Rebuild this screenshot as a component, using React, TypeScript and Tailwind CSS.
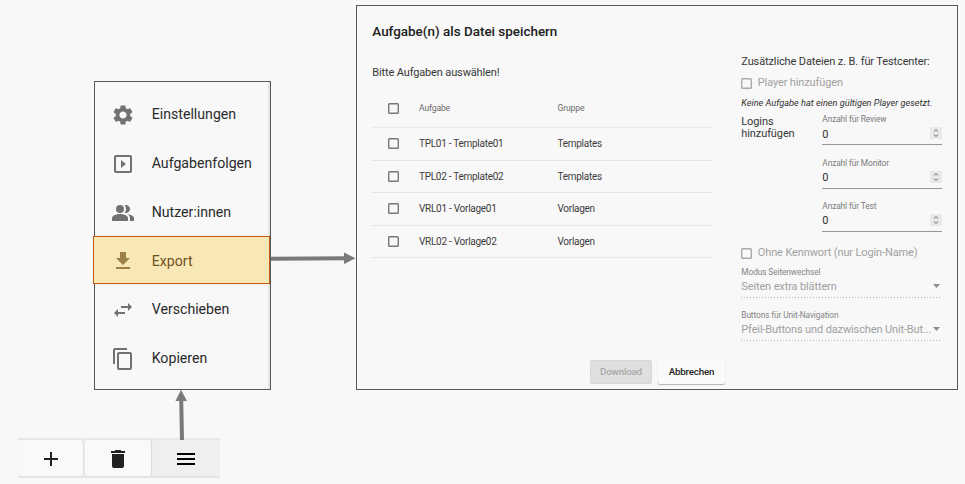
import type { ReactNode } from 'react';

const paths = {
  settings:
    'M19.14 12.94c.04-.3.06-.61.06-.94 0-.32-.02-.64-.07-.94l2.03-1.58c.18-.14.23-.41.12-.61l-1.92-3.32c-.12-.22-.37-.29-.59-.22l-2.39.96c-.5-.38-1.03-.7-1.62-.94l-.36-2.54c-.04-.24-.24-.41-.48-.41h-3.84c-.24 0-.43.17-.47.41l-.36 2.54c-.59.24-1.13.57-1.62.94l-2.39-.96c-.22-.08-.47 0-.59.22L2.74 8.87c-.12.21-.08.47.12.61l2.03 1.58c-.05.3-.09.63-.09.94s.02.64.07.94l-2.03 1.58c-.18.14-.23.41-.12.61l1.92 3.32c.12.22.37.29.59.22l2.39-.96c.5.38 1.03.7 1.62.94l.36 2.54c.05.24.24.41.48.41h3.84c.24 0 .44-.17.47-.41l.36-2.54c.59-.24 1.13-.56 1.62-.94l2.39.96c.22.08.47 0 .59-.22l1.92-3.32c.12-.22.07-.47-.12-.61l-2.01-1.58zM12 15.6c-1.98 0-3.6-1.62-3.6-3.6s1.62-3.6 3.6-3.6 3.6 1.62 3.6 3.6-1.62 3.6-3.6 3.6z',
  slideshow:
    'M10 8v8l5-4-5-4zm9-5H5c-1.1 0-2 .9-2 2v14c0 1.1.9 2 2 2h14c1.1 0 2-.9 2-2V5c0-1.1-.9-2-2-2zm0 16H5V5h14v14z',
  people:
    'M16.67 13.13C18.04 14.06 19 15.32 19 17v3h4v-3c0-2.18-3.57-3.47-6.33-3.87zM9 4a4 4 0 1 0 0 8 4 4 0 0 0 0-8zM15 12c2.21 0 4-1.79 4-4s-1.79-4-4-4c-.47 0-.91.1-1.33.24C14.5 5.27 15 6.58 15 8s-.5 2.73-1.33 3.76c.42.14.86.24 1.33.24zM9 13c-2.67 0-8 1.34-8 4v3h16v-3c0-2.66-5.33-4-8-4z',
  download: 'M19 9h-4V3H9v6H5l7 7 7-7zM5 18v2h14v-2H5z',
  swap: 'M6.99 11L3 15l3.99 4v-3H14v-2H6.99v-3zM21 9l-3.99-4v3H10v2h7.01v3L21 9z',
  copy: 'M16 1H4c-1.1 0-2 .9-2 2v14h2V3h12V1zm3 4H8c-1.1 0-2 .9-2 2v14c0 1.1.9 2 2 2h11c1.1 0 2-.9 2-2V7c0-1.1-.9-2-2-2zm0 16H8V7h11v14z',
  add: 'M19 13h-6v6h-2v-6H5v-2h6V5h2v6h6v2z',
  trash: 'M6 19c0 1.1.9 2 2 2h8c1.1 0 2-.9 2-2V7H6v12zM19 4h-3.5l-1-1h-5l-1 1H5v2h14V4z',
  menu: 'M3 18h18v-2H3v2zm0-5h18v-2H3v2zm0-7v2h18V6H3z',
};

type IconName = keyof typeof paths;

function Icon({ name, className = '' }: { name: IconName; className?: string }) {
  return (
    <svg viewBox="0 0 24 24" fill="currentColor" className={`size-6 shrink-0 ${className}`}>
      <path d={paths[name]} />
    </svg>
  );
}

const menuItems: { icon: IconName; label: string; active?: boolean }[] = [
  { icon: 'settings', label: 'Einstellungen' },
  { icon: 'slideshow', label: 'Aufgabenfolgen' },
  { icon: 'people', label: 'Nutzer:innen' },
  { icon: 'download', label: 'Export', active: true },
  { icon: 'swap', label: 'Verschieben' },
  { icon: 'copy', label: 'Kopieren' },
];

function SideMenu() {
  return (
    <nav className="ml-[94px] mt-[81px] h-[309px] w-[177px] border border-[#58585a] pt-[8px] shadow-[inset_-2px_0_0_#e4e4e4]">
      {menuItems.map((item) => (
        <div
          key={item.label}
          className={
            item.active
              ? '-ml-[2px] mb-[1px] flex h-[47.7px] w-[177px] items-center border border-[#c55a11] bg-[#f8e8b6] pl-[17.3px] text-[#70511f]'
              : 'flex h-[48.7px] items-center pl-[16.3px] text-[#2a2a2a]'
          }
        >
          <Icon name={item.icon} className={item.active ? 'mt-[3px] text-[#9c8048]' : 'mt-[2px] text-[#717174]'} />
          <span className={item.active ? 'ml-[16.4px] pt-[3px] text-[14.15px]' : 'ml-[16.4px] pt-[1px] text-[14.15px]'}>
            {item.label}
          </span>
        </div>
      ))}
    </nav>
  );
}

function Toolbar() {
  return (
    <div className="ml-[18px] mt-[48px] flex h-[40px] w-[202px] bg-[#efefef] pb-[2px] pt-[2px] text-[#212121] shadow-[inset_0_2px_0_#e8e8e8,inset_0_-2px_0_#e4e4e4]">
      <div className="flex w-[65px] items-center justify-center rounded-[3px] bg-[#f9f9f9] pl-[1px] pt-[2px] shadow-[1px_0_1px_#dcdcdc]">
        <Icon name="add" />
      </div>
      <div className="ml-[2px] flex w-[66px] items-center justify-center rounded-[3px] bg-[#f9f9f9] pt-[2px] shadow-[1px_0_1px_#d8d8d8]">
        <Icon name="trash" />
      </div>
      <div className="flex flex-1 items-center justify-center pt-[2px] text-black">
        <Icon name="menu" />
      </div>
    </div>
  );
}

function Box({ className = 'text-[#77777a]' }: { className?: string }) {
  return (
    <svg viewBox="0 0 11 11" className={`size-[11px] shrink-0 ${className}`} fill="none" stroke="currentColor">
      <rect x="0.7" y="0.7" width="9.6" height="9.6" rx="0.8" strokeWidth="1.4" />
    </svg>
  );
}

const rows = [
  ['TPL01 - Template01', 'Templates'],
  ['TPL02 - Template02', 'Templates'],
  ['VRL01 - Vorlage01', 'Vorlagen'],
  ['VRL02 - Vorlage02', 'Vorlagen'],
];

function TaskTable() {
  return (
    <div className="mt-[10px] w-[341px] text-[10px] tracking-[-0.27px] text-[#3c3c3c]">
      <div className="flex h-[39px] items-center border-b border-[#ebebeb] pl-[16px] text-[8.6px] tracking-[-0.15px] text-[#6b6b6b]">
        <Box />
        <span className="ml-[19.7px] w-[138.5px]">Aufgabe</span>
        <span>Gruppe</span>
      </div>
      {rows.map(([name, group]) => (
        <div key={name} className="flex h-[32.6px] items-center border-b border-[#e6e6e6] pl-[16px]">
          <Box />
          <span className="ml-[19.7px] w-[138.5px]">{name}</span>
          <span>{group}</span>
        </div>
      ))}
    </div>
  );
}

function Spinner() {
  return (
    <span className="flex h-[12px] w-[12px] items-center justify-center bg-[#e9e9eb] text-[#9a9a9e]">
      <svg viewBox="0 0 12 12" className="size-3" fill="none" stroke="currentColor" strokeWidth="1.2">
        <path d="M3.8 4.6 6 2.6l2.2 2M3.8 7.4 6 9.4l2.2-2" />
      </svg>
    </span>
  );
}

function NumberField({ label }: { label: string }) {
  return (
    <div className="h-[43.4px] w-[120px]">
      <div className="text-[8.4px] leading-[10px] tracking-[-0.13px] text-[#7b7b7b]">{label}</div>
      <div className="flex h-[21px] items-start justify-between border-b border-[#969696] pt-[3px]">
        <span className="pt-[0.3px] text-[11px] leading-[13px] text-[#303030]">0</span>
        <Spinner />
      </div>
    </div>
  );
}

function SelectField({ label, value }: { label: string; value: string }) {
  return (
    <div className="h-[43.3px] w-[200px]">
      <div className="text-[8.4px] leading-[10px] tracking-[-0.13px] text-[#858585]">{label}</div>
      <div className="flex h-[16px] items-end justify-between pr-[1px] text-[#a0a0a0]">
        <span className="whitespace-nowrap text-[11px] leading-[13px] tracking-[-0.13px]">{value}</span>
        <svg viewBox="0 0 7 4" className="mb-[5px] h-[4px] w-[7px] shrink-0" fill="#8d8d8d">
          <path d="M0 0h7L3.5 4z" />
        </svg>
      </div>
      <svg viewBox="0 0 200 1" className="mt-[4px] h-px w-[200px]" stroke="#b4b4b4">
        <path d="M0 .5h200" strokeDasharray="1 2" />
      </svg>
    </div>
  );
}

function DisabledCheck({ children }: { children: ReactNode }) {
  return (
    <div className="flex h-[14px] items-center text-[11px] tracking-[-0.13px] text-[#a1a1a1]">
      <Box className="text-[#aaaaaa]" />
      <span className="ml-[5.5px] whitespace-nowrap">{children}</span>
    </div>
  );
}

function ExportDialog() {
  return (
    <section className="mt-[5px] flex h-[385px] w-[602px] flex-col border border-[#58585a] pl-[15.3px]">
      <div className="flex h-[350px]">
        <div className="w-[369px]">
          <h1 className="mt-[17px] text-[13.45px] font-medium leading-[18px] text-[#202020]">
            Aufgabe(n) als Datei speichern
          </h1>
          <p className="mt-[25px] text-[11px] leading-[13px] tracking-[-0.14px] text-[#373737]">
            Bitte Aufgaben auswählen!
          </p>
          <TaskTable />
        </div>
        <div className="w-[203px] whitespace-nowrap pt-[49px] text-[#373737]">
          <p className="text-[11px] leading-[13px] tracking-[-0.12px]">Zusätzliche Dateien z. B. für Testcenter:</p>
          <div className="mt-[8px]">
            <DisabledCheck>Player hinzufügen</DisabledCheck>
          </div>
          <p className="mt-[7px] text-[9.2px] italic leading-[12px] text-[#303030]">
            Keine Aufgabe hat einen gültigen Player gesetzt.
          </p>
          <div className="mt-[5px] flex h-[130px]">
            <p className="w-[81px] pt-[1.6px] text-[11px] leading-[12.4px] tracking-[-0.1px]">
              Logins
              <br />
              hinzufügen
            </p>
            <div className="pt-[0.4px]">
              <NumberField label="Anzahl für Review" />
              <NumberField label="Anzahl für Monitor" />
              <NumberField label="Anzahl für Test" />
            </div>
          </div>
          <div className="mt-[2px]">
            <DisabledCheck>Ohne Kennwort (nur Login-Name)</DisabledCheck>
          </div>
          <div className="mt-[7px]">
            <SelectField label="Modus Seitenwechsel" value="Seiten extra blättern" />
            <SelectField label="Buttons für Unit-Navigation" value="Pfeil-Buttons und dazwischen Unit-But..." />
          </div>
        </div>
      </div>
      <div className="ml-[217.7px] mt-[4px] flex text-[9.8px] font-medium tracking-[-0.22px]">
        <button className="h-[24px] w-[62px] rounded-[2px] border border-[#d8d8d8] bg-[#dfdfdf] text-[#a9a9a9]">
          Download
        </button>
        <button className="ml-[6px] h-[24px] w-[67px] rounded-[2px] bg-[#fafafa] text-[#242424] shadow-[0_1px_1px_#b5b5b5,0_0_1px_#e4e4e4]">
          Abbrechen
        </button>
      </div>
    </section>
  );
}

export default function App() {
  return (
    <div className="relative flex h-[484px] w-[965px] overflow-hidden bg-[#f8f8f8] font-['Roboto',sans-serif]">
      <div className="w-[356px]">
        <SideMenu />
        <Toolbar />
      </div>
      <ExportDialog />
      <svg className="pointer-events-none absolute inset-0" width="965" height="484" fill="#7a7a7a" stroke="#7a7a7a">
        <path d="M271 258.7 346 258.2" strokeWidth="4" />
        <path d="M344 252.5 355.5 258.2 344 264z" stroke="none" />
        <path d="M182 440 181.2 399" strokeWidth="4" />
        <path d="M175.5 401 181 389.8 187 401z" stroke="none" />
      </svg>
    </div>
  );
}
